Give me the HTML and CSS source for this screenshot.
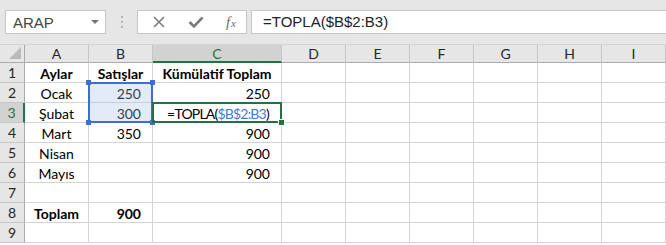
FILE: index.html
```html
<html lang="tr">
<head>
    <meta charset="UTF-8">
    <title>TOPLA</title>
    <link rel="stylesheet" href="styles.css">
</head>
<body>

<div class="toolbar">
    <div class="name-box">
        <span>ARAP</span>
        <span class="caret"></span>
    </div>
    <div class="grip">
        <i></i><i></i><i></i>
    </div>
    <div class="fx-buttons">
        <svg class="btn" width="14" height="14" viewBox="0 0 14 14">
            <path d="M2 2 L12 12 M12 2 L2 12" stroke="#7b7b7b" stroke-width="1.6" fill="none"/>
        </svg>
        <svg class="btn" width="16" height="14" viewBox="0 0 16 14">
            <path d="M1.5 7 L6 11.5 L14.5 2.5" stroke="#7b7b7b" stroke-width="2.6" fill="none"/>
        </svg>
        <span class="fx">f<sub>x</sub></span>
    </div>
    <div class="formula-input">=TOPLA($B$2:B3)</div>
</div>

<div class="sheet-wrap">
    <div class="sheet">
        <!-- column headers -->
        <div class="corner"><span class="tri"></span></div>
        <div class="col-head">A</div>
        <div class="col-head">B</div>
        <div class="col-head active">C</div>
        <div class="col-head">D</div>
        <div class="col-head">E</div>
        <div class="col-head">F</div>
        <div class="col-head">G</div>
        <div class="col-head">H</div>
        <div class="col-head">I</div>

        <!-- row 1 -->
        <div class="row-head">1</div>
        <div class="cell center bold">Aylar</div>
        <div class="cell center bold">Satışlar</div>
        <div class="cell center bold">Kümülatif Toplam</div>
        <div class="cell"></div><div class="cell"></div><div class="cell"></div><div class="cell"></div><div class="cell"></div><div class="cell"></div>

        <!-- row 2 -->
        <div class="row-head">2</div>
        <div class="cell center">Ocak</div>
        <div class="cell num">250</div>
        <div class="cell num">250</div>
        <div class="cell"></div><div class="cell"></div><div class="cell"></div><div class="cell"></div><div class="cell"></div><div class="cell"></div>

        <!-- row 3 -->
        <div class="row-head active">3</div>
        <div class="cell center">Şubat</div>
        <div class="cell num">300</div>
        <div class="cell center formula">=TOPLA(<span class="ref">$B$2:B3</span>)</div>
        <div class="cell"></div><div class="cell"></div><div class="cell"></div><div class="cell"></div><div class="cell"></div><div class="cell"></div>

        <!-- row 4 -->
        <div class="row-head">4</div>
        <div class="cell center">Mart</div>
        <div class="cell num">350</div>
        <div class="cell num">900</div>
        <div class="cell"></div><div class="cell"></div><div class="cell"></div><div class="cell"></div><div class="cell"></div><div class="cell"></div>

        <!-- row 5 -->
        <div class="row-head">5</div>
        <div class="cell center">Nisan</div>
        <div class="cell"></div>
        <div class="cell num">900</div>
        <div class="cell"></div><div class="cell"></div><div class="cell"></div><div class="cell"></div><div class="cell"></div><div class="cell"></div>

        <!-- row 6 -->
        <div class="row-head">6</div>
        <div class="cell center">Mayıs</div>
        <div class="cell"></div>
        <div class="cell num">900</div>
        <div class="cell"></div><div class="cell"></div><div class="cell"></div><div class="cell"></div><div class="cell"></div><div class="cell"></div>

        <!-- row 7 -->
        <div class="row-head">7</div>
        <div class="cell"></div><div class="cell"></div><div class="cell"></div>
        <div class="cell"></div><div class="cell"></div><div class="cell"></div><div class="cell"></div><div class="cell"></div><div class="cell"></div>

        <!-- row 8 -->
        <div class="row-head">8</div>
        <div class="cell center bold">Toplam</div>
        <div class="cell num bold">900</div>
        <div class="cell"></div>
        <div class="cell"></div><div class="cell"></div><div class="cell"></div><div class="cell"></div><div class="cell"></div><div class="cell"></div>

        <!-- row 9 -->
        <div class="row-head">9</div>
        <div class="cell"></div><div class="cell"></div><div class="cell"></div>
        <div class="cell"></div><div class="cell"></div><div class="cell"></div><div class="cell"></div><div class="cell"></div><div class="cell"></div>
    </div>

    <!-- selection layer, same grid as the sheet -->
    <div class="marks">
        <div class="range">
            <i class="h tl"></i><i class="h tr"></i><i class="h bl"></i><i class="h br"></i>
        </div>
        <div class="active-cell"><i class="fill-handle"></i></div>
    </div>
</div>

</body>
</html>
```

FILE: styles.css
```css
body {
    margin: 0;
    background-color: #fff;
    font-family: Lato, "Liberation Sans", sans-serif;
    color: #000;
    overflow: hidden;
}

/* Formula bar */
.toolbar {
    display: flex;
    align-items: center;
    height: 45px;
    padding: 0 0 0 5px;
    box-sizing: border-box;
    background-color: #e6e6e6;
    border-bottom: 1px solid #d5d5d5;
}

.name-box {
    display: flex;
    align-items: center;
    justify-content: space-between;
    width: 101px;
    height: 24px;
    box-sizing: border-box;
    padding: 0 6px 0 7px;
    background-color: #fff;
    border: 1px solid #c6c6c6;
    font-family: "Liberation Sans", Arial, sans-serif;
    font-size: 15px;
    color: #444;
}

.caret {
    width: 0;
    height: 0;
    border-left: 4px solid transparent;
    border-right: 4px solid transparent;
    border-top: 4px solid #777;
}

.grip {
    display: flex;
    flex-direction: column;
    gap: 3px;
    width: 2px;
    margin: 0 14px 0 15px;
}

.grip i {
    width: 2px;
    height: 2px;
    background-color: #b4b4b4;
}

.fx-buttons {
    display: flex;
    align-items: center;
    justify-content: space-between;
    width: 110px;
    height: 24px;
    box-sizing: border-box;
    padding: 0 10px 0 14px;
    background-color: #fff;
    border: 1px solid #c6c6c6;
}

.fx {
    font-family: "Liberation Serif", serif;
    font-style: italic;
    font-size: 15px;
    color: #6d6d6d;
    line-height: 1;
}

.fx sub {
    font-size: 11px;
    vertical-align: 0;
    margin-left: 1px;
}

.formula-input {
    flex: 1;
    height: 24px;
    box-sizing: border-box;
    margin-left: 4px;
    padding-left: 11px;
    background-color: #fff;
    border: 1px solid #c6c6c6;
    border-right: none;
    font-family: "Liberation Sans", Arial, sans-serif;
    font-size: 15px;
    line-height: 22px;
    color: #222;
}

/* Sheet grid: the cells and the selection layer share one grid area */
.sheet-wrap {
    display: grid;
}

.sheet,
.marks {
    grid-area: 1 / 1;
    display: grid;
    grid-template-columns: 25px 64px 64px 129px repeat(6, 64px);
    grid-template-rows: 18px repeat(9, 20px);
}

.sheet {
    font-size: 14px;
}

.marks {
    pointer-events: none;
}

.corner,
.col-head,
.row-head {
    background-color: #e6e6e6;
    color: #262626;
    display: flex;
    align-items: center;
    justify-content: center;
    box-sizing: border-box;
}

.corner {
    position: relative;
    border-right: 1px solid #ababab;
    border-bottom: 1px solid #ababab;
}

.tri {
    position: absolute;
    right: 3px;
    bottom: 3px;
    width: 0;
    height: 0;
    border-left: 12px solid transparent;
    border-bottom: 12px solid #b9b9b9;
}

.col-head {
    border-right: 1px solid #c6c6c6;
    border-bottom: 1px solid #ababab;
}

.col-head.active {
    background-color: #d2d2d2;
    color: #217346;
    border-bottom: 2px solid #217346;
}

.row-head {
    border-right: 1px solid #ababab;
    border-bottom: 1px solid #c6c6c6;
}

.row-head.active {
    background-color: #d2d2d2;
    color: #217346;
    border-right: 2px solid #217346;
}

.cell {
    display: flex;
    align-items: center;
    box-sizing: border-box;
    border-right: 1px solid #d4d4d4;
    border-bottom: 1px solid #d4d4d4;
    white-space: nowrap;
    padding-top: 1px;
}

.center {
    justify-content: center;
}

.num {
    justify-content: flex-end;
    padding-right: 11px;
}

.bold {
    font-weight: bold;
}

.formula {
    letter-spacing: -0.8px;
    padding-left: 2px;
}

.ref {
    color: #3c78d8;
}

/* Range B2:B3 referenced by the formula */
.range {
    grid-column: 3;
    grid-row: 3 / span 2;
    position: relative;
    margin: -1px 0 0 -1px;
    background-color: rgba(160, 190, 230, 0.3);
    border: 2px solid #3c6fd0;
}

.h {
    position: absolute;
    width: 5px;
    height: 5px;
    background-color: #3c6fd0;
}

.tl { left: -4px; top: -4px; }
.tr { right: -4px; top: -4px; }
.bl { left: -4px; bottom: -4px; }
.br { right: -4px; bottom: -4px; }

/* Active cell C3 */
.active-cell {
    grid-column: 4;
    grid-row: 4;
    position: relative;
    margin: -1px 0 0 -1px;
    border: 2px solid #217346;
}

.fill-handle {
    position: absolute;
    right: -5px;
    bottom: -5px;
    width: 5px;
    height: 5px;
    background-color: #217346;
    border: 1px solid #fff;
}
```
